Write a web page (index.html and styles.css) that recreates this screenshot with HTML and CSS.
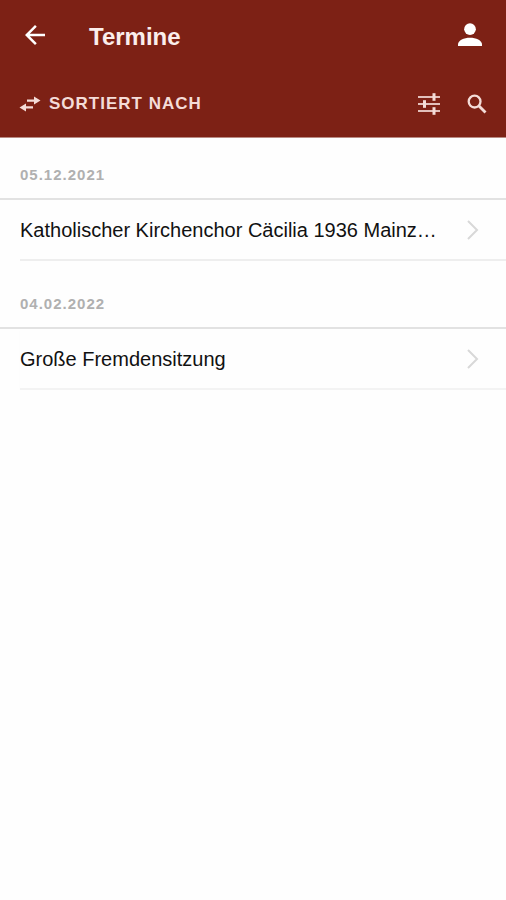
FILE: index.html
```html
<!DOCTYPE html>
<html lang="de">
<head>
<meta charset="utf-8">
<meta name="viewport" content="width=device-width, initial-scale=1">
<title>Termine</title>
<link rel="stylesheet" href="styles.css">
</head>
<body>
<header class="header">
  <div class="bar">
    <button class="icon-button" type="button" aria-label="Zurück">
      <svg width="30" height="30" viewBox="0 0 24 24" fill="currentColor"><path d="M20 11H7.830l5.590-5.590L12 4l-8 8 8 8 1.410-1.410L7.830 13H20v-2z"/></svg>
    </button>
    <h1 class="title">Termine</h1>
    <button class="icon-button" type="button" aria-label="Profil">
      <svg width="36" height="36" viewBox="0 0 24 24" fill="currentColor"><circle cx="12" cy="8.100" r="3.900"/><path d="M4 19.400v-1c0-2.900 4-4.600 8-4.600s8 1.700 8 4.600v1z"/></svg>
    </button>
  </div>
  <div class="toolbar">
    <button class="sort" type="button">
      <svg width="22" height="16" viewBox="0 0 22 16" fill="currentColor"><path d="M8 3.400h7V0.600L21.500 4.600l-6.500 4V5.800H8zM14 10.200H7V7.400L0.500 11.400l6.500 4v-2.800h7z"/></svg>
      <span>SORTIERT NACH</span>
    </button>
    <div class="tools">
      <button class="icon-button" type="button" aria-label="Filter">
        <svg width="24" height="24" viewBox="0 0 24 24" fill="currentColor"><path d="M1 4h22v2H1zM1 11h22v2H1zM1 18h22v2H1z" opacity=".85"/><rect x="15.500" y="1.200" width="3" height="7.600"/><rect x="6" y="8.200" width="3" height="7.600"/><rect x="15.500" y="15.200" width="3" height="7.600"/></svg>
      </button>
      <button class="icon-button" type="button" aria-label="Suche">
        <svg width="24" height="24" viewBox="0 0 24 24" fill="none" stroke="currentColor"><circle cx="9.600" cy="9.600" r="5.900" stroke-width="2.300"/><path d="M14 14l6.500 6.500" stroke-width="2.900"/></svg>
      </button>
    </div>
  </div>
</header>
<main>
  <section>
    <h2 class="date">05.12.2021</h2>
    <a class="event" href="#">
      <span class="name">Katholischer Kirchenchor Cäcilia 1936 Mainz…</span>
      <svg width="14" height="22" viewBox="0 0 14 22" fill="none" stroke="currentColor" stroke-width="2"><path d="M2 2l9 9-9 9"/></svg>
    </a>
  </section>
  <section>
    <h2 class="date">04.02.2022</h2>
    <a class="event" href="#">
      <span class="name">Große Fremdensitzung</span>
      <svg width="14" height="22" viewBox="0 0 14 22" fill="none" stroke="currentColor" stroke-width="2"><path d="M2 2l9 9-9 9"/></svg>
    </a>
  </section>
</main>
</body>
</html>
```
FILE: styles.css
```css
* {
  box-sizing: border-box;
}

body {
  margin: 0;
  background: #fefefe;
  color: #111;
  font-family: "Liberation Sans", Arial, sans-serif;
}

button {
  padding: 0;
  border: 0;
  background: none;
  color: inherit;
  font: inherit;
}

svg {
  display: block;
  flex: none;
}

.header {
  background: #7d2115;
  border-bottom: 1px solid #b98a83;
  color: #fff;
}

.bar {
  display: flex;
  align-items: center;
  height: 70px;
  padding: 0 18px 0 20px;
}

.title {
  flex: 1;
  margin: 0;
  padding: 3px 0 0 39px;
  font-size: 24px;
  line-height: 28px;
  color: #fbeeec;
}

.toolbar {
  display: flex;
  align-items: center;
  justify-content: space-between;
  height: 67px;
  padding: 0 17px 0 19px;
  color: #f4dcd8;
}

.sort {
  display: flex;
  align-items: center;
  gap: 8px;
  font-size: 17px;
  font-weight: bold;
  line-height: 24px;
  letter-spacing: 1px;
}

.tools {
  display: flex;
  gap: 24px;
}

.date {
  margin: 0;
  padding: 35px 20px 15px;
  border-bottom: 2px solid #e2e2e2;
  font-size: 15px;
  line-height: 16px;
  letter-spacing: 1px;
  color: #b0b0b0;
}

section:first-child .date {
  padding-top: 29px;
}

.event {
  display: flex;
  align-items: center;
  gap: 20px;
  height: 61px;
  margin-left: 20px;
  padding-right: 26px;
  border-bottom: 2px solid #eee;
  color: #111;
  text-decoration: none;
}

section:last-child .event {
  border-bottom-color: #f3f3f3;
  box-shadow: 0 2px 1px #fafafa;
}

.name {
  flex: 1;
  min-width: 0;
  overflow: hidden;
  font-size: 20px;
  line-height: 28px;
  white-space: nowrap;
  text-overflow: ellipsis;
}

.event svg {
  color: #d8d8d8;
}
```
